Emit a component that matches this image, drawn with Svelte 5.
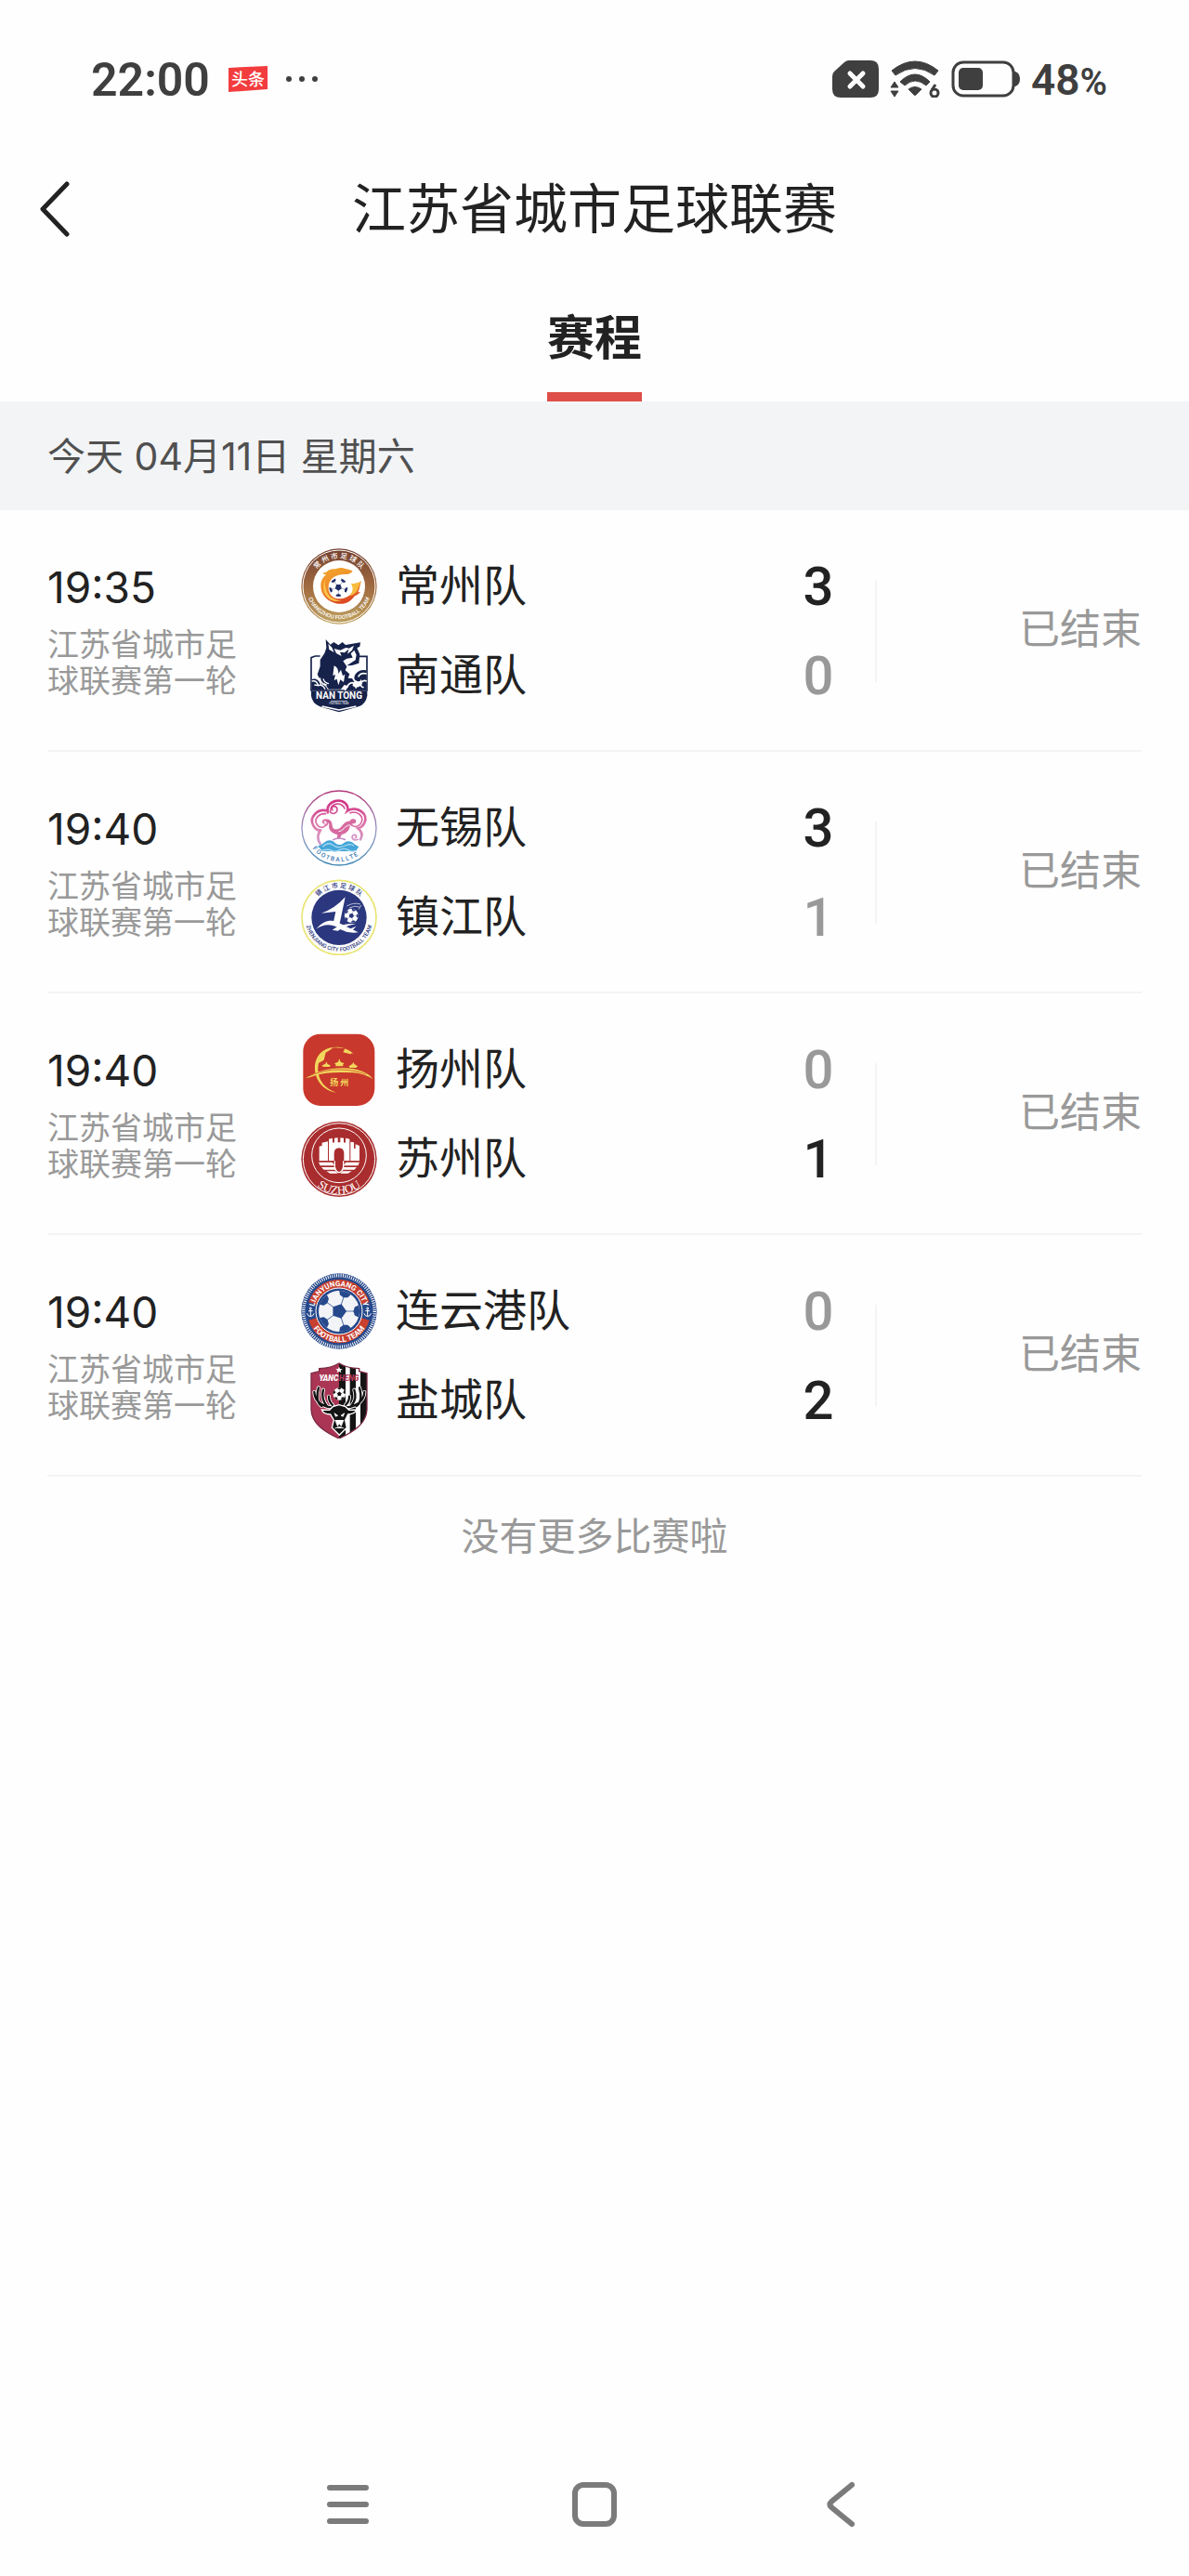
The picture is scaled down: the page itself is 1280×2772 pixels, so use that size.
<script>
  const league = '江苏省城市足球联赛第一轮';

  let matches = $state([
    {
      time: '19:35',
      teams: [
        { name: '常州队', score: 3, badge: changzhou },
        { name: '南通队', score: 0, badge: nantong }
      ]
    },
    {
      time: '19:40',
      teams: [
        { name: '无锡队', score: 3, badge: wuxi },
        { name: '镇江队', score: 1, badge: zhenjiang }
      ]
    },
    {
      time: '19:40',
      teams: [
        { name: '扬州队', score: 0, badge: yangzhou },
        { name: '苏州队', score: 1, badge: suzhou }
      ]
    },
    {
      time: '19:40',
      teams: [
        { name: '连云港队', score: 0, badge: lianyungang },
        { name: '盐城队', score: 2, badge: yancheng }
      ]
    }
  ]);

  const wins = (match, team) => match.teams.every((t) => t.score <= team.score);
</script>

{#snippet ball(cx, cy, scale, dark, light, turn)}
  <g transform="translate({cx} {cy}) rotate({turn}) scale({scale})">
    <circle r="30" fill={light} />
    <path d="M0-11 10.5-3.4 6.5 9-6.5 9-10.5-3.4Z" fill={dark} />
    {#each [0, 72, 144, 216, 288] as angle}
      <g transform="rotate({angle})">
        <path d="M-9-28.6-6-23 0-21 6-23 9-28.6A30 30 0 0 0-9-28.6Z" fill={dark} />
        <path d="M0-10V-22" stroke={dark} stroke-width="1" />
      </g>
    {/each}
  </g>
{/snippet}

{#snippet changzhou()}
  <svg class="badge" viewBox="42 30 246 246" aria-hidden="true">
    <defs>
      <linearGradient id="cz-ring" x1="0" y1="0" x2="0" y2="1">
        <stop offset="0" stop-color="#74402f" />
        <stop offset="0.5" stop-color="#a06a40" />
        <stop offset="1" stop-color="#bfa25f" />
      </linearGradient>
      <linearGradient id="cz-fire" x1="0" y1="0" x2="0.3" y2="1">
        <stop offset="0" stop-color="#f3a52c" />
        <stop offset="0.6" stop-color="#ee8a2a" />
        <stop offset="1" stop-color="#dc4a25" />
      </linearGradient>
      <path id="cz-top" d="M74 153A91 91 0 0 1 256 153" />
      <path id="cz-low" d="M59 153A106 106 0 0 0 271 153" />
    </defs>
    <circle cx="165" cy="153" r="122" fill="url(#cz-ring)" />
    <circle cx="165" cy="153" r="117" fill="none" stroke="#fff" stroke-width="3" />
    <circle cx="165" cy="153" r="84" fill="#fff" />
    <text class="seal thin" font-size="23" fill="#fff" text-anchor="middle">
      <textPath href="#cz-top" startOffset="50%">常 州 市 足 球 队</textPath>
    </text>
    <text class="seal thin" font-size="18" fill="#fff" text-anchor="middle">
      <textPath href="#cz-low" startOffset="50%">CHANGZHOU FOOTBALL TEAM</textPath>
    </text>
    <path
      d="M122 108c8-9 20-13 32-11 8-4 20-6 29-2 8 2 16 4 26 8-4 8-12 11-20 11-16-1-34 2-45 12-12 11-17 30-10 47 6 14 20 21 35 20 24-1 44-18 50-42 4-7 11-11 18-15-5 12-4 24-11 36l8-1c-5 7-13 11-20 14-12 19-33 27-53 24-32-4-56-29-55-58 0-17 7-28 18-36-6 0-9-2-12-5 4-1 7-1 10-2Z"
      fill="url(#cz-fire)"
    />
    <path d="M120 133c-10 22-6 48 14 61 12 8 28 9 40 5-20-1-38-9-47-26-6-12-8-26-7-40Z" fill="#fac34a" />
    <path d="M203 143c8 4 17-2 34-5-8 7-8 22-16 32-6 8-14 12-22 13 10-12 14-25 4-40Z" fill="#f7bb3e" />
    {@render ball(163, 156, 1, '#202c66', '#fff', 36)}
  </svg>
{/snippet}

{#snippet nantong()}
  <svg class="badge" viewBox="42 318 246 246" aria-hidden="true">
    <path d="M104 378H88L75 383V489H255V379H231" fill="none" stroke="#16224a" stroke-width="5" />
    <path
      d="M122 324 137 341 148 333 163 343 176 333 186 342 234 334 232 347 223 352 232 372 229 401 207 408 190 409 205 399 218 391 221 374 214 359 203 370 209 383 190 386 178 394 190 412 185 424 199 436 194 449 207 450 214 461 205 478 182 471 171 485H131L119 466 109 470 104 455 95 437 104 411 104 390 118 369 124 352Z"
      fill="#16224a"
    />
    <path d="M130 338 142 350 149 366 133 357Z" fill="#fff" />
    <path d="M149 354 169 359 187 351 199 353 183 367 168 365 173 378 156 369Z" fill="#fff" />
    <path d="M197 353 213 344 207 359 192 371Z" fill="#fff" />
    <path d="M149 409q14 5 14 26l8-13 6 20 7-5-4 25-11-8-6 18-5-20-9 4 4-18-8 3Z" fill="#fff" />
    <path d="M103 448q2 21 22 23M114 451q4 14 18 16" fill="none" stroke="#fff" stroke-width="4" />
    <path d="M77 453c12-5 24 2 28 18 9-2 19 3 24 17H77Z" fill="#16224a" />
    <path d="M77 459q15-4 21 14l-13-2m13 2q14-5 22 12" fill="none" stroke="#fff" stroke-width="4" />
    <path
      d="M253 424q-24-4-36 14-9 16 7 21 10 3 12-7 8 17-5 24-13 6-22-2l-8-18q-1 24-18 32h70Z"
      fill="#16224a"
    />
    <path
      d="M254 435q-20-5-27 10m27 14q-12-5-18 6-3 13 9 14m-61 10q11-25 24-25 16 2 11 18"
      fill="none"
      stroke="#fff"
      stroke-width="5"
    />
    <path d="M75 491H256V506Q251 533 228 541L165 559 103 541Q78 530 75 506Z" fill="#16224a" />
    <path d="M110 540 165 552 220 540" fill="none" stroke="#fff" stroke-width="5" />
    <path d="M138 523H192" stroke="#fff" stroke-width="2" />
    <text class="seal" x="165" y="516" font-size="30" fill="#fff" text-anchor="middle">NAN TONG</text>
    <text class="seal" x="165" y="534" font-size="8" fill="#c9cede" text-anchor="middle">FOOTBALL TEAM</text>
  </svg>
{/snippet}

{#snippet wuxi()}
  <svg class="badge" viewBox="42 30 246 246" aria-hidden="true">
    <defs>
      <linearGradient id="wx-ring" x1="0" y1="0" x2="0" y2="1">
        <stop offset="0" stop-color="#b23778" />
        <stop offset="0.55" stop-color="#9a9ac8" />
        <stop offset="1" stop-color="#3d86b4" />
      </linearGradient>
      <linearGradient id="wx-plum" gradientUnits="userSpaceOnUse" x1="165" y1="62" x2="165" y2="215">
        <stop offset="0" stop-color="#cf2f83" />
        <stop offset="0.6" stop-color="#dd7fae" />
        <stop offset="1" stop-color="#cda2d6" />
      </linearGradient>
      <path id="wx-low" d="M57 153A108 108 0 0 0 273 153" />
    </defs>
    <circle cx="165" cy="153" r="120" fill="#fff" stroke="url(#wx-ring)" stroke-width="4" />
    <g fill="none" stroke="url(#wx-plum)" stroke-linecap="round">
      <path
        d="M129 103C118 66 178 49 192 83q3 9 0 15C221 79 264 107 246 139q-7 12-20 15 20 15 8 36M129 98C95 88 67 119 82 145q7 14 22 16-14 22 0 43"
        stroke-width="8"
      />
      <path
        d="M137 102C134 72 172 66 183 90M201 104c24-8 45 12 36 31-6 14-22 17-32 8M122 107c-25-2-38 20-29 34 8 13 23 13 29 1"
        stroke-width="5"
      />
      <path
        d="M138 103c15 10 29-9 16-19-10-4-16 5-10 11M206 144c-9-7-3-20 6-18 8 2 6 11 0 10M120 145c11-2 9-19-1-18-8 1-8 9-2 10M226 190c-16 7-24-8-15-14 9-3 14 6 6 9"
        stroke-width="5"
      />
    </g>
    <g fill="#d76a9f">
      <path d="M116 128c11-8 24 0 26 10 2 8 1 17 10 19 21 3 22-17 37-24 9-4 19-4 31-8-4 12-12 16-20 17 2 17-11 29-26 32l-8 15h-8l2-14c-20-5-31-18-27-34-2-6-8-8-17-13Z" />
    </g>
    <path d="M160 151c9-2 11-22 22-28 9-5 19-6 26-6M164 164c13 0 20-19 35-21" fill="none" stroke="#fff" stroke-width="3" />
    <path d="M145 191q20-10 41 0" fill="none" stroke="#c48ac6" stroke-width="5" />
    <path
      d="M96 211c17-2 23-18 38-18 18 0 17 15 34 14 13-1 14-11 27-11 16 0 18 12 34 17l-10 15H112Z"
      fill="#44a5d8"
    />
    <path
      d="M112 214q17-17 31-7t24 8 26-8q12-3 20 4M112 225q19-5 30 1t25-2 27 0 25 1"
      fill="none"
      stroke="#a5d8f0"
      stroke-width="4"
    />
    <text class="seal thin" font-size="20" fill="#3d78b0">
      <textPath href="#wx-low" startOffset="21%">F O O T B A L L  T E</textPath>
    </text>
  </svg>
{/snippet}

{#snippet zhenjiang()}
  <svg class="badge" viewBox="42 318 246 246" aria-hidden="true">
    <defs>
      <path id="zj-top" d="M69 442A96 96 0 0 1 261 442" />
      <path id="zj-low" d="M56 442A109 109 0 0 0 274 442" />
    </defs>
    <circle cx="165" cy="442" r="120" fill="#fff" stroke="#e9e573" stroke-width="5" />
    <circle cx="165" cy="442" r="89" fill="#2b377e" />
    <text class="seal thin" font-size="21" fill="#2b377e" text-anchor="middle">
      <textPath href="#zj-top" startOffset="50%">镇 江 市 足 球 队</textPath>
    </text>
    <text class="seal thin" font-size="18" fill="#2b377e" text-anchor="middle">
      <textPath href="#zj-low" startOffset="50%">ZHENJIANG CITY FOOTBALL TEAM</textPath>
    </text>
    <path d="M185 376 169 452 165 466H145L154 423 108 428Q151 414 185 376Z" fill="#fff" />
    <path d="M91 479C121 444 149 448 172 463 188 472 206 479 227 490 204 493 184 490 160 474 137 461 114 463 91 479Z" fill="#fff" />
    <path d="M143 482Q178 458 219 463 188 468 161 485ZM184 485 221 470 203 488Z" fill="#fff" />
    {@render ball(205, 436, 0.75, '#2b377e', '#fff', 20)}
    <path d="M190 405q22-13 44-6M198 411q19-9 33-3M228 416l9-14" fill="none" stroke="#fff" stroke-width="2" />
  </svg>
{/snippet}

{#snippet yangzhou()}
  <svg class="badge" viewBox="42 30 246 246" aria-hidden="true">
    <rect x="49" y="38" width="231" height="232" rx="56" fill="#c8382c" />
    <g fill="#f2d75c">
      <path d="M213 103C176 67 111 74 92 119 76 157 96 219 157 227 105 211 91 167 99 132l17-10 6-24 18-11 5-6 39 4-6 12 23 6 6-3Z" />
      <path d="M57 181Q94 156 141 150 199 144 235 157 262 166 275 184 246 166 211 163 126 159 92 171 72 178 57 181Z" />
      <path d="M166 118 170 128 182 133 178 136V142H154V136L150 133 162 128ZM124 127 127 134 138 140 134 144H114L109 140 121 134ZM211 128 214 135 225 142 220 147H199L197 142 208 135Z" />
      <text class="brush" x="166" y="203" font-size="27" text-anchor="middle">扬 州</text>
    </g>
    <path d="M68 174Q120 151 171 153T253 169" fill="none" stroke="#c8382c" stroke-width="2" />
  </svg>
{/snippet}

{#snippet suzhou()}
  <svg class="badge" viewBox="42 318 246 246" aria-hidden="true">
    <defs>
      <path id="sz-low" d="M52 442A113 113 0 0 0 278 442" />
    </defs>
    <circle cx="165" cy="442" r="122" fill="#a92d2e" />
    <circle cx="165" cy="442" r="116" fill="none" stroke="#fff" stroke-width="3" />
    <circle cx="165" cy="430" r="88" fill="none" stroke="#fff" stroke-width="3" />
    <g fill="#fff">
      <path d="M101 447V401L110 398V389L129 385V447ZM132 447V377L144 374V389L150 388V374L161 373V388H169V373L180 374V388L186 389V374L199 377V447H181V424Q181 406 165 406 149 406 149 424V447ZM202 447V386L213 388V407L218 408V394L231 399V447Z" />
      <path d="M99 452H143L151 463H104ZM231 452H187L179 463H226ZM108 468H150L157 476H116ZM222 468H180L173 476H214ZM124 481H153L161 488H136ZM206 481H177L169 488H194Z" />
    </g>
    <path d="M151 448V466Q153 483 165 485 177 483 179 466V448" fill="none" stroke="#fff" stroke-width="4" />
    <text class="serif" font-size="38" fill="#fff" text-anchor="middle">
      <textPath href="#sz-low" startOffset="50%">SUZHOU</textPath>
    </text>
  </svg>
{/snippet}

{#snippet lianyungang()}
  <svg class="badge" viewBox="42 30 246 246" aria-hidden="true">
    <defs>
      <path id="lyg-top" d="M84 153A81 81 0 0 1 246 153" />
      <path id="lyg-low" d="M65 153A100 100 0 0 0 265 153" />
    </defs>
    <circle cx="165" cy="153" r="122" fill="#26498c" />
    <circle cx="165" cy="153" r="115" fill="none" stroke="#fff" stroke-width="11" stroke-dasharray="3 4" />
    <circle cx="165" cy="153" r="107" fill="#26498c" />
    <path d="M67 124A102 102 0 0 1 263 124L233 133A71 71 0 0 0 97 133ZM67 182A102 102 0 0 0 263 182L233 173A71 71 0 0 1 97 173Z" fill="#c8402f" />
    <circle cx="165" cy="153" r="75" fill="#26498c" stroke="#fff" stroke-width="3" />
    <text class="seal" font-size="24" fill="#fff" text-anchor="middle">
      <textPath href="#lyg-top" startOffset="50%">LIANYUNGANG CITY</textPath>
    </text>
    <text class="seal" font-size="25" fill="#fff" text-anchor="middle">
      <textPath href="#lyg-low" startOffset="50%">FOOTBALL TEAM</textPath>
    </text>
    {@render ball(165, 153, 2.2, '#26498c', '#f3f4f7', 18)}
    <g fill="none" stroke="#fff" stroke-width="3">
      <path d="M73 147v22m-7-17h14m-18 8q2 9 11 10 9-1 11-10M257 147v22m-7-17h14m-18 8q2 9 11 10 9-1 11-10" />
      <circle cx="73" cy="144" r="3" />
      <circle cx="257" cy="144" r="3" />
    </g>
  </svg>
{/snippet}

{#snippet yancheng()}
  <svg class="badge" viewBox="42 318 246 246" aria-hidden="true">
    <defs>
      <clipPath id="yc-shield">
        <path d="M165 321C146 333 125 337 101 338V347L75 353V470C77 518 121 544 165 564 209 544 253 518 255 470V353L230 347V338C206 337 184 333 165 321Z" />
      </clipPath>
    </defs>
    <g clip-path="url(#yc-shield)">
      <path d="M70 318H165V565H70Z" fill="#aa3554" />
      <path d="M165 318H260V565H165Z" fill="#fff" />
      <path d="M165 318H186V565H165ZM200 318H219V565H200ZM234 318H260V565H234Z" fill="#141414" />
    </g>
    <path
      d="M165 321C146 333 125 337 101 338V347L75 353V470C77 518 121 544 165 564 209 544 253 518 255 470V353L230 347V338C206 337 184 333 165 321Z"
      fill="none"
      stroke="#7a2a42"
      stroke-width="4"
    />
    <path d="M165 332l3 7h8l-6 5 2 8-7-5-7 5 2-8-6-5h8Z" fill="#fff" />
    <text class="seal slanted" x="163" y="377" font-size="25" text-anchor="end" fill="#fff">YANC</text>
    <text class="seal slanted" x="165" y="377" font-size="25" fill="#b93a58">HENG</text>
    <g fill="none" stroke-linecap="round" stroke-linejoin="round">
      <path
        d="M150 463C118 465 86 447 85 414M109 459C91 447 92 425 99 400M127 461C109 439 109 423 114 407M180 463C212 465 246 447 247 414M221 459C239 447 238 425 231 400M203 461C221 439 219 423 214 407M144 456q-13-13-12-28M186 456q13-13 12-28"
        stroke="#fff"
        stroke-width="12"
      />
      <path
        d="M150 463C118 465 86 447 85 414M109 459C91 447 92 425 99 400M127 461C109 439 109 423 114 407M180 463C212 465 246 447 247 414M221 459C239 447 238 425 231 400M203 461C221 439 219 423 214 407M144 456q-13-13-12-28M186 456q13-13 12-28"
        stroke="#141414"
        stroke-width="7"
      />
    </g>
    <path
      d="M145 461 165 455 186 461 197 472 222 471Q214 486 194 486L185 504 190 529 166 553 142 529 148 504 137 486Q115 486 109 471L134 472Z"
      fill="#141414"
      stroke="#fff"
      stroke-width="4"
    />
    <path d="M150 482 161 490 154 493ZM182 482 171 490 178 493ZM152 504l8 20 6-8 6 8 8-20M151 531l15-5 15 5" fill="#fff" stroke="#fff" stroke-width="2" />
    {@render ball(166, 420, 0.67, '#141414', '#fff', 0)}
  </svg>
{/snippet}

<div class="screen">
  <div class="status-bar">
    <div class="status-left">
      <span class="clock">22:00</span>
      <svg width="42" height="28" viewBox="0 0 42 28" role="img" aria-label="头条">
        <path d="M0 2 42 0V25L0 28Z" fill="#f23c3e" />
        <text class="seal thin" x="21" y="21" font-size="18" fill="#fff" text-anchor="middle">头条</text>
      </svg>
      <svg width="34" height="6" viewBox="0 0 34 6" fill="#3f3f3f" aria-hidden="true">
        <circle cx="3" cy="3" r="3" /><circle cx="17" cy="3" r="3" /><circle cx="31" cy="3" r="3" />
      </svg>
    </div>
    <div class="status-right">
      <svg width="50" height="40" viewBox="0 0 50 40" aria-hidden="true">
        <path d="M18 0H41Q50 0 50 9V31Q50 40 41 40H9Q0 40 0 31V17Q0 14 2 12L13 2Q15 0 18 0Z" fill="#3f3f3f" />
        <path d="M19 14 33 28M33 14 19 28" stroke="#fff" stroke-width="5" stroke-linecap="round" />
      </svg>
      <svg width="54" height="40" viewBox="0 0 54 40" aria-hidden="true">
        <g fill="#3f3f3f" stroke="#3f3f3f" stroke-linejoin="round">
          <path d="M2 11Q27-9 52 11L48 16Q27 1 6 16Z" />
          <path d="M11 23Q27 7 43 23L39 27Q27 17 16 27Z" />
          <path d="M20 31Q27 26 34 31L28 37Q27 38 26 37Z" />
          <path d="M5 23 9 29H1ZM5 39 9 33H1Z" />
        </g>
        <path d="M49 26 45 32" stroke="#3f3f3f" stroke-width="3" />
        <circle cx="48" cy="35" r="4" fill="none" stroke="#3f3f3f" stroke-width="3" />
      </svg>
      <svg width="74" height="40" viewBox="0 0 74 40" aria-hidden="true">
        <rect x="2" y="2" width="65" height="36" rx="11" fill="none" stroke="#3f3f3f" stroke-width="3" />
        <rect x="8" y="8" width="26" height="24" rx="5" fill="#3f3f3f" />
        <path d="M68 12H69Q74 14 74 20 74 26 69 28H68Z" fill="#3f3f3f" />
      </svg>
      <span class="charge">48<small>%</small></span>
    </div>
  </div>

  <header>
    <button class="back" aria-label="返回">
      <svg width="34" height="60" viewBox="0 0 34 60" fill="none" stroke="#222" stroke-width="5" stroke-linecap="round" stroke-linejoin="round">
        <path d="M30 3 4 30 30 57" />
      </svg>
    </button>
    <h1>江苏省城市足球联赛</h1>
  </header>

  <div class="tabs" role="tablist">
    <button class="tab" role="tab" aria-selected="true">赛程</button>
  </div>

  <main>
    <h2>今天 04月11日 星期六</h2>
    <ul>
      {#each matches as match}
        <li>
          <div class="info">
            <time>{match.time}</time>
            <p>{league}</p>
          </div>
          <div class="teams">
            {#each match.teams as team}
              <div class="team">
                {@render team.badge()}
                <span class="name">{team.name}</span>
                <span class="score" class:win={wins(match, team)}>{team.score}</span>
              </div>
            {/each}
          </div>
          <div class="rule"></div>
          <span class="state">已结束</span>
        </li>
      {/each}
    </ul>
    <p class="end">没有更多比赛啦</p>
  </main>

  <nav aria-label="系统导航">
    <button aria-label="最近任务">
      <svg width="50" height="50" viewBox="0 0 50 50"><path d="M6 7H45M6 25H45M6 43H45" /></svg>
    </button>
    <button aria-label="主页">
      <svg width="50" height="50" viewBox="0 0 50 50"><rect x="4" y="4" width="42" height="42" rx="9" /></svg>
    </button>
    <button aria-label="返回上一页">
      <svg width="50" height="50" viewBox="0 0 50 50"><path d="M36 4 14 22Q11 25 14 28L36 46" /></svg>
    </button>
  </nav>
</div>

<style>
  :global(body) {
    margin: 0;
    background: #fefefe;
  }

  .screen {
    display: flex;
    flex-direction: column;
    min-height: 100vh;
    color: #222;
    font-family: Inter, 'Noto Sans CJK SC', sans-serif;
  }

  h1, h2, p, ul {
    margin: 0;
    padding: 0;
    font-weight: 400;
  }

  button {
    border: 0;
    padding: 0;
    background: none;
    color: inherit;
    font-family: inherit;
    cursor: pointer;
  }

  svg {
    display: block;
    flex: none;
  }

  .status-bar {
    display: flex;
    justify-content: space-between;
    align-items: center;
    height: 170px;
    padding: 0 88px 0 98px;
    color: #3f3f3f;
    font-family: Roboto, Inter, sans-serif;
    font-weight: 600;
  }

  .status-left,
  .status-right {
    display: flex;
    align-items: center;
  }

  .status-left {
    gap: 20px;
  }

  .status-right {
    gap: 12px;
  }

  .clock {
    padding-top: 2px;
    font-size: 50px;
  }

  .charge {
    padding-top: 2px;
    font-size: 46px;
  }

  .charge small {
    font-size: 40px;
  }

  header {
    display: grid;
    grid-template-columns: 76px 1fr 76px;
    align-items: center;
    height: 110px;
  }

  .back {
    justify-self: end;
  }

  h1 {
    font-size: 58px;
    line-height: 80px;
    text-align: center;
  }

  .tabs {
    display: flex;
    justify-content: center;
    padding-top: 54px;
  }

  .tab {
    padding-bottom: 28px;
    border-bottom: 10px solid #dd4f48;
    font-size: 51px;
    font-weight: 700;
    line-height: 60px;
  }

  h2 {
    padding: 29px 51px 28px;
    background: #f3f4f6;
    color: #505050;
    font-size: 41px;
    line-height: 60px;
  }

  ul {
    margin: 0 51px;
    list-style: none;
  }

  li {
    display: flex;
    align-items: center;
    padding: 41px 0 39px;
    border-bottom: 2px solid #f4f4f4;
  }

  .info {
    width: 273px;
  }

  time {
    display: block;
    margin-bottom: 16px;
    font-size: 46px;
    line-height: 52px;
  }

  .info p {
    width: 210px;
    color: #999;
    font-size: 34px;
    line-height: 39px;
  }

  .teams {
    display: grid;
    flex: 1;
    gap: 14px;
  }

  .team {
    display: flex;
    align-items: center;
    padding-right: 29px;
  }

  .badge {
    width: 82px;
    height: 82px;
  }

  .name {
    flex: 1;
    margin-left: 20px;
    padding-bottom: 2px;
    font-size: 47px;
    line-height: 60px;
  }

  .score {
    width: 64px;
    color: #999;
    font-family: Roboto, Inter, sans-serif;
    font-size: 58px;
    font-weight: 500;
    line-height: 60px;
    text-align: center;
  }

  .score.win {
    color: #222;
  }

  .rule {
    width: 2px;
    height: 110px;
    background: #f4f4f4;
  }

  .state {
    width: 285px;
    padding-bottom: 4px;
    color: #999;
    font-size: 44px;
    line-height: 60px;
    text-align: right;
  }

  .end {
    padding: 34px 0;
    color: #999;
    font-size: 41px;
    line-height: 60px;
    text-align: center;
  }

  nav {
    display: flex;
    justify-content: center;
    gap: 216px;
    margin-top: auto;
    padding-bottom: 52px;
  }

  nav svg {
    fill: none;
    stroke: #7b7b7b;
    stroke-width: 6;
    stroke-linecap: round;
    stroke-linejoin: round;
  }

  .seal {
    font-family: Roboto, 'Noto Sans CJK SC', sans-serif;
    font-weight: 700;
  }

  .thin {
    font-weight: 500;
  }

  .slanted {
    font-style: italic;
    font-weight: 900;
  }

  .serif {
    font-family: 'Liberation Serif', serif;
  }

  .brush {
    font-family: 'Noto Sans CJK SC', sans-serif;
    font-weight: 700;
  }
</style>
